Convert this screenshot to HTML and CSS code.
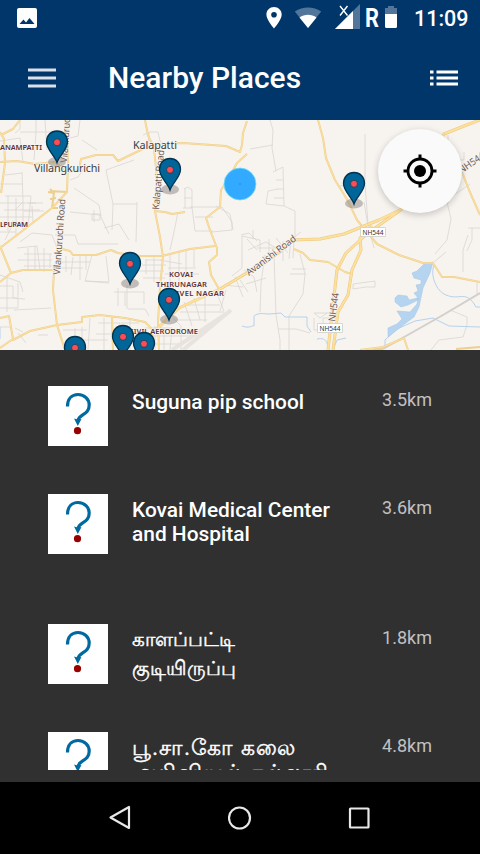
FILE: index.html
```html
<!DOCTYPE html>
<html lang="en">
<head>
<meta charset="utf-8">
<title>Nearby Places</title>
<link rel="stylesheet" href="styles.css">
</head>
<body>
<svg class="defs" aria-hidden="true">
  <symbol id="marker" viewBox="0 0 30 42">
    <ellipse cx="15" cy="33" rx="9" ry="5" fill="#817b78" fill-opacity=".45"/>
    <path d="M15 33.500C13 27 4.500 20.500 4.500 13C4.500 6.500 9 2 15 2s10.500 4.500 10.500 11c0 7.500-8.500 14-10.500 20.500z" fill="#006699" stroke="#02334f" stroke-width="1.300"/>
    <circle cx="15" cy="13.300" r="3.500" fill="#ff4b52" stroke="#123e5c" stroke-width=".8"/>
  </symbol>
  <symbol id="question" viewBox="0 0 60 60">
    <path d="M19.500 20.500C19.500 12.500 24 8.500 30 8.500c6.500 0 11.200 4.700 11.200 10.500C41.200 29.500 31 27.500 29.800 35" fill="none" stroke="#0069a0" stroke-width="3.200"/>
    <path d="M26 32.500L29.500 33.500L33.500 33L29.800 40z" fill="#0069a0"/>
    <circle cx="29.500" cy="44.700" r="3.600" fill="#990000"/>
  </symbol>
</svg>
<div class="screen">
  <header class="top">
    <div class="status">
      <svg class="status-art" viewBox="0 0 410 36">
        <path d="M19 8h16a2 2 0 0 1 2 2v16a2 2 0 0 1-2 2H19a2 2 0 0 1-2-2V10a2 2 0 0 1 2-2z" fill="#fff"/>
        <path d="M19.500 24l4-4.500 2.500 3 3.500-4.500 5 6z" fill="#00366a"/>
        <path d="M274 7c-4.300 0-7.600 3.300-7.600 7.500C266.400 20 274 28.500 274 28.500s7.700-8.500 7.700-14C281.700 10.300 278.300 7 274 7zm0 5a2.800 2.800 0 1 1 0 5.600 2.800 2.800 0 0 1 0-5.600z" fill="#fff" fill-rule="evenodd"/>
        <path d="M308 28L294.800 11.500c8-5.500 18.500-5.500 26.400 0z" fill="#527699"/>
        <path d="M308 28l-8.500-10.600c5-3.500 12-3.500 17 0z" fill="#fff"/>
        <path d="M335 29L360 4v25z" fill="#527699"/>
        <path d="M335 29l18-18v18z" fill="#fff"/>
        <path d="M340 6l7.500 9.500M347.500 6L340 15.500" stroke="#00366a" stroke-width="3"/>
        <path d="M340 6l7.500 9.500M347.500 6L340 15.500" stroke="#fff" stroke-width="1.400"/>
        <path d="M385 14V8h3V6h6v2h3v6z" fill="#527699"/>
        <path d="M385 14h12v12.500a1.500 1.500 0 0 1-1.500 1.500h-9a1.500 1.500 0 0 1-1.500-1.500z" fill="#fff"/>
        <text x="365" y="27" class="roaming" textLength="14" lengthAdjust="spacingAndGlyphs">R</text>
      </svg>
      <span class="clock">11:09</span>
    </div>
    <div class="toolbar">
      <svg class="menu" viewBox="0 0 28 20"><path d="M0 2h28M0 10h28M0 18h28" stroke="#dbe1ea" stroke-width="3"/></svg>
      <h1>Nearby Places</h1>
      <svg class="list-icon" viewBox="0 0 28 16"><path d="M0 2h3.500M6.500 2H28M0 8h3.500M6.500 8H28M0 14h3.500M6.500 14H28" stroke="#fff" stroke-width="2.800"/></svg>
    </div>
  </header>

  <section class="map">
    <svg class="map-art" viewBox="0 0 480 230">
      <rect width="480" height="230" fill="#f7f3ef"/>
      <g class="lanes">
        <path d="M20 0v9l-5 4M20 12h45M36 0v12l-2 28M45 0l2 30M0 21l20-3 3 24M22 52l1 30-8 8M5 55l17-2M0 64h23M70 18l8-2 2-16M82 20l15 10M70 60l8-3 8-12M74 68l25 17 2 11M106 50l28-10M106 50l7 34h24M113 84l-1 26M70 92l30 3 9 19M137 82l-1 40"/>
        <path d="M5 76h26l-3 30M0 83h36M4 90h36M0 97h32M8 76v35M16 78v37M23 82v27M32 86l1 16M2 104h25M0 112h16M5 120l7-14M92 94h8v6h-8zM94 90v12M104 108l15-4 10 16M28 83h15M24 91h20M12 101l13 3"/>
        <path d="M17 128l20-2 3 24M24 134h28M18 140h34M24 146h32M28 128v23M35 126v23M44 128v24M50 134v14M20 122l12-9 20 2 5 13M55 115h20l3 9h40M62 142h28M60 148h23M66 136v16M73 137l-2 18M80 136v24M86 134v16M92 135l-7 26 24 1-3-26M85 161l24 2"/>
        <path d="M0 155l20 7 3 10M0 166h13v12l12 1M0 178h18v10H0M7 158v34M18 163v14M14 190l37-2M15 208l8 4M0 207h10M18 213l8 10M38 215h10M75 208v22M82 207v23M90 198l-2 32M98 203h22v12M104 198v32M121 203h18M130 198v32M96 214h25M63 210h24M70 220h38"/>
        <path d="M114 172h30v12M118 168v18M125 172v14M127 165v24M128 189h17l4 7M146 140h16M142 145h24M139 151h25M146 139v15M154 136v26M143 158h22M160 140l22 4M168 148h28M165 154h34M170 134v30M179 132v29M186 130v24M194 130v17"/>
        <path d="M143 15l7-3h8l2 9 5 5M149 13l-1 12 14 2M184 69l4-2 4 3v18h-9M184 78h8M185 68v20M178 92l-4 20-4 18M190 87h32l10 15v8l-20 2M192 87l3 24h18M195 97h18M216 86l14 8 3 16M241 115l8-2 8 8M253 110v9M270 0l3 10-1 18 4 23M250 29l23-4M273 52l10-5 1 39-18-2 2-13 10-2M276 60h7M277 69h7M274 78h10M284 86l11 5v29"/>
        <path d="M145 208h27l-2 22M151 216h40M150 224h30M155 206v24M164 208v22M173 198l8 8v24M184 185h36M180 192h44M177 200h30M184 182l8 24M194 178l6 22M205 174v28M216 171l8 20M224 165l19 2M226 170l-6 21M235 157l8 20M240 160l8 12M244 150l10 7 3 15M246 164l20-6M260 132v-12l-18-4v32l-10 8M247 119l10 11M248 130l18-8 15 9M257 128h27M269 119v18M276 118l12 15M283 121v20M291 119l-2 20M265 135l-4 28-1 29M274 135l2 60 4 25v10M289 121l12-9M294 120l-1 18M300 134l5 20-2 20-14 22v34M290 154h16M292 149h14M278 209h18l14 4"/>
        <path d="M365 14v50l3 40 6 24M340 66l24-8M364 82l4 24M448 15v46M455 30v10h-7M454 40h10v-8M448 79l22-15M447 82l4 17-4 21-12 14M472 108v12l-5 11M468 108h12M445 79l4 4M353 164v5l13-2h9v-6zM314 198v12h9v-12h15v-5h-24M314 193l6 5 7-5M468 115l-5 15v22M446 132l-12 10M450 190l17 7v8l-4 12-24 3-8 10M477 161v13l3-1"/>
      </g>
      <path d="M172 230l54-36M183 230l48-40" class="runway"/>
      <path d="M242 206c8 3 10-1 12 0V196c5-4 10-2 15-2l12-1 4 4h22v9l4 6M434 145c-4 10 2 26 12 30 14 6 20-6 30 12h4M385 228v-8l12-11 18-8 18-3 16 8 31 1M0 207v12M317 219c5-1 9 0 10 4l2 7M333 230l4-10 9-2M407 183l11-5" class="stream"/>
      <path d="M433 142L424 144L417 151L412 153L414 158L421 160L421 164L416 165L418 171L414 173L418 178L417 184L410 192L397 191L402 199L397 204L388 208L388 217L402 206L414 197L419 187L423 168L430 153ZM418 178L409 180L407 176L398 175L395 178L395 182L401 187L408 185L418 180Z" class="lake"/>
      <path d="M383 229l60-34 37-22" class="rail"/>
      <path class="road-case" d="M20 0l-7 9-12 6M0 12l4 7 1 24-4 30M0 42l17-1 18 3 20-2 12 10 12-2 2-11 15-4h17l5 6 33-16 15-1 17-1 43 3 14 6 2-7 1-12 4-12M67 0l1 42-1 30-15 16-22 17-13 10-17 13M0 126l11 27-11 9M11 153l12-3h31M67 72l-17-1M54 150l-1 20 4 35 8 25M50 69l4 4-2 15h6M48 72l6 1M50 79l6-1M62 129l8 2 3 4h23l15-5 7 3 22 3h22l28-7 25-3M0 198l9-2 4 23-13 9M13 220l17-9 27-6 25-3v-5l18-2 25 3 20 4 12 12M112 197l1 33M145 0l3 15 6 14 3 28-2 34 5 26 3 20-3 30-2 35 1 28M155 91l10 1 7 2 13-2M247 34l-10 9-7 13-9 14-1 17-14 11 4 12 7 18v7l-8 7 2 13 8 14M318 0l5 18 3 20 9 22 13 21 9 19 15 18 5 6 22 11 24 8h10l9 14h12l26 5M462 52l7 18 11 25M294 129l9 4 7 7 18 2 17 10 7 2M360 230l23-3 21-9 4 12M383 229l-10 1M456 229l24-2"/>
      <path class="road" d="M20 0l-7 9-12 6M0 12l4 7 1 24-4 30M0 42l17-1 18 3 20-2 12 10 12-2 2-11 15-4h17l5 6 33-16 15-1 17-1 43 3 14 6 2-7 1-12 4-12M67 0l1 42-1 30-15 16-22 17-13 10-17 13M0 126l11 27-11 9M11 153l12-3h31M54 150l-1 20 4 35 8 25M62 129l8 2 3 4h23l15-5 7 3 22 3h22l28-7 25-3M0 198l9-2 4 23-13 9M13 220l17-9 27-6 25-3v-5l18-2 25 3 20 4 12 12M112 197l1 33M145 0l3 15 6 14 3 28-2 34 5 26 3 20-3 30-2 35 1 28M155 91l10 1 7 2 13-2M247 34l-10 9-7 13-9 14-1 17-14 11 4 12 7 18v7l-8 7 2 13 8 14M318 0l5 18 3 20 9 22 13 21 9 19 15 18 5 6 22 11 24 8h10l9 14h12l26 5M462 52l7 18 11 25M294 129l9 4 7 7 18 2 17 10 7 2M360 230l23-3 21-9 4 12"/>
      <path class="highway-case" d="M148 218l15-15 16-15 41-19 25-15 35-22 13-12 27-1 24-5 35-14 23-11 42-75 20-8 16-6M402 89l-34 24-22 20-9 17-4 35-5 45M372 106l-12 12 1 12-9 20-4 25-10 17-5 38"/>
      <path class="highway" d="M148 218l15-15 16-15 41-19 25-15 35-22 13-12 27-1 24-5 35-14 23-11 42-75 20-8 16-6M402 89l-34 24-22 20-9 17-4 35-5 45M372 106l-12 12 1 12-9 20-4 25-10 17-5 38"/>
      <g class="labels">
        <text x="0" y="30" class="area" textLength="42">ANAMPATTI</text>
        <text x="0" y="107" class="area" textLength="28">LPURAM</text>
        <text x="34" y="52" class="town" textLength="66">Villangkurichi</text>
        <text x="133" y="29" class="town" textLength="44">Kalapatti</text>
        <text x="169" y="157" class="area" textLength="24">KOVAI</text>
        <text x="156" y="167" class="area" textLength="51">THIRUNAGAR</text>
        <text x="166" y="176" class="area" textLength="58">VAIVEL NAGAR</text>
        <text x="129" y="214" class="area" textLength="69">CIVIL AERODROME</text>
        <text transform="translate(60 155) rotate(-86)" class="street" textLength="76">Vilankuruchi Road</text>
        <text transform="translate(67 43) rotate(-86)" class="street" textLength="76">Vilankuruchi Road</text>
        <text transform="translate(159 90) rotate(-85)" class="street" textLength="60">Kalapatti Road</text>
        <text transform="translate(249 156) rotate(-37)" class="street" textLength="60">Avanishi Road</text>
        <text transform="translate(335 202) rotate(-82)" class="street" textLength="29">NH544</text>
        <text transform="translate(461 54) rotate(-35)" class="street" textLength="30">NH544</text>
        <rect x="360.500" y="107.500" width="25" height="9" rx="1" class="shield"/>
        <text x="362.500" y="115" class="ref" textLength="21" lengthAdjust="spacingAndGlyphs">NH544</text>
        <rect x="317.500" y="203.500" width="25" height="9" rx="1" class="shield"/>
        <text x="319.500" y="211" class="ref" textLength="21" lengthAdjust="spacingAndGlyphs">NH544</text>
      </g>
      <circle cx="240" cy="64" r="16" fill="#32aaff" stroke="#75dff2" stroke-width="1" stroke-opacity=".8"/>
      <circle cx="240" cy="64" r=".8" fill="#2284d9"/>
      <use href="#marker" x="42" y="9" width="30" height="42"/>
      <use href="#marker" x="155" y="36.500" width="30" height="42"/>
      <use href="#marker" x="339" y="50.500" width="30" height="42"/>
      <use href="#marker" x="115" y="130.500" width="30" height="42"/>
      <use href="#marker" x="154" y="166.500" width="30" height="42"/>
      <use href="#marker" x="60" y="214.500" width="30" height="42"/>
      <use href="#marker" x="108" y="203.500" width="30" height="42"/>
      <use href="#marker" x="129" y="210.500" width="30" height="42"/>
    </svg>
    <button class="locate" aria-label="My location">
      <svg viewBox="0 0 34 34"><circle cx="17" cy="17" r="6" fill="#000"/><circle cx="17" cy="17" r="12" fill="none" stroke="#000" stroke-width="2.800"/><path d="M17 .5V5M17 29v4.500M.5 17H5M29 17h4.500" stroke="#000" stroke-width="3"/></svg>
    </button>
  </section>

  <main class="places">
    <ul>
      <li><svg class="thumb"><use href="#question"/></svg><h2>Suguna pip school</h2><span class="km">3.5km</span></li>
      <li class="tall"><svg class="thumb"><use href="#question"/></svg><h2>Kovai Medical Center and Hospital</h2><span class="km">3.6km</span></li>
      <li><svg class="thumb"><use href="#question"/></svg><h2 class="tamil" lang="ta">காளப்பட்டி<br>குடியிருப்பு</h2><span class="km">1.8km</span></li>
      <li><svg class="thumb"><use href="#question"/></svg><h2 class="tamil wide" lang="ta">பூ.சா.கோ கலை<br>அறிவியல் கல்லூரி</h2><span class="km">4.8km</span></li>
    </ul>
  </main>

  <nav class="navbar">
    <svg viewBox="0 0 24 26"><path d="M21 2v21L2.500 12.500z"/></svg>
    <svg viewBox="0 0 24 26"><circle cx="11.500" cy="13" r="10.500"/></svg>
    <svg viewBox="0 0 24 26"><rect x="2" y="3.500" width="18.500" height="19" rx=".5"/></svg>
  </nav>
</div>
</body>
</html>
```
FILE: styles.css
```css
* { box-sizing: border-box; }
body { margin: 0; background: #000; font-family: Roboto, "Noto Sans", sans-serif; color: #fff; }
.defs { display: none; }
.screen { width: 480px; height: 854px; display: flex; flex-direction: column; overflow: hidden; }

.top { height: 120px; background: #00366a; flex: none; }
.status { display: flex; height: 36px; }
.status-art { width: 410px; height: 36px; flex: none; }
.roaming { font: 700 25.5px Roboto, sans-serif; fill: #fff; }
.clock { margin-left: 4px; font-size: 21.5px; font-weight: 500; line-height: 38px; }
.toolbar { display: flex; align-items: center; height: 84px; padding: 0 22px 0 28px; }
.menu { width: 28px; height: 20px; margin-top: -1px; }
.toolbar h1 { margin: 0 auto 0 52px; font-size: 30px; font-weight: 500; line-height: 40px; white-space: nowrap; }
.list-icon { width: 28px; height: 16px; }

.map { height: 230px; flex: none; position: relative; overflow: hidden; }
.map-art { display: block; width: 480px; height: 230px; }
.map-art path { fill: none; stroke-linejoin: round; }
.lanes { stroke: #d9d5d2; stroke-width: .8; }
.runway { stroke: #e8e3df; stroke-width: 4; }
.stream { stroke: #b6d2eb; stroke-width: 1; }
.map-art .lake { fill: #b5d4f0; stroke: #a3c5e5; stroke-width: .5; }
.rail { stroke: #d2cfcc; stroke-width: 2; }
.road-case { stroke: #edcf8f; stroke-width: 2; }
.road { stroke: #fbdf9e; stroke-width: 1.1; }
.highway-case { stroke: #e9c87f; stroke-width: 3; }
.highway { stroke: #fde09c; stroke-width: 2; }
.labels { font-family: "Noto Sans", sans-serif; stroke: #f7f3ef; stroke-width: 1.6; paint-order: stroke; stroke-linejoin: round; }
.town { font-size: 10.8px; fill: #3c3c3c; }
.area { font-size: 7.6px; font-weight: 600; fill: #5c3038; }
.street { font-size: 9.6px; fill: #705d55; }
.labels .shield { fill: #fff; stroke: #999; stroke-width: .8; }
.labels .ref { font-size: 7.6px; fill: #333; stroke: none; }
.locate { position: absolute; top: 9px; right: 18px; width: 84px; height: 84px; display: grid; place-items: center; padding: 0; border: 0; border-radius: 50%; background: #fafafa; box-shadow: 0 2px 7px rgba(0, 0, 0, .2); }
.locate svg { width: 34px; height: 34px; }

.places { height: 432px; flex: none; padding: 36px 48px 12px; background: #303030; }
.places ul { height: 384px; margin: 0; padding: 0; overflow: hidden; list-style: none; display: flex; flex-direction: column; gap: 48px; }
.places li { display: flex; align-items: flex-start; height: 60px; flex: none; }
.places li.tall { height: 82px; }
.thumb { width: 60px; height: 60px; margin-right: 24px; flex: none; background: #fff; }
.places h2 { width: 226px; margin: 4px 0 0; font-size: 20.9px; line-height: 24px; font-weight: 500; }
.places h2.tamil { font-size: 20.4px; line-height: 29px; margin-top: 1px; white-space: nowrap; font-weight: 400; -webkit-text-stroke: .45px #fff; }
.places h2.wide { margin-top: 3px; font-size: 21.6px; letter-spacing: 1.2px; line-height: 25px; }
.km { margin-left: auto; margin-top: 2px; font-size: 18px; line-height: 24px; color: #c1c1c1; }

.navbar { height: 72px; flex: none; display: flex; justify-content: center; align-items: center; gap: 96px; background: #000; }
.navbar svg { width: 24px; height: 26px; fill: none; stroke: #e8e8e8; stroke-width: 2.2; stroke-linejoin: round; }
```
